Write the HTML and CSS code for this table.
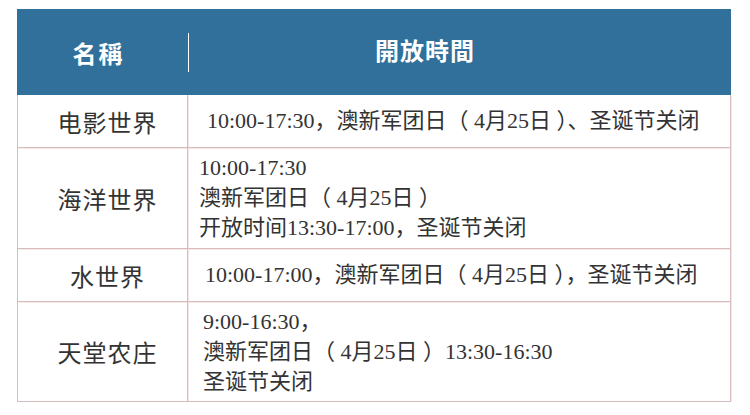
FILE: index.html
```html
<!DOCTYPE html>
<html lang="zh">
<head>
<meta charset="utf-8">
<title>开放时间</title>
<link rel="stylesheet" href="styles.css">
</head>
<body>
<div class="wrap">
  <div class="table">
    <div class="head name-h">名稱</div>
    <div class="head time-h"><span class="divider">開放時間</span></div>

    <div class="cell name r1">电影世界</div>
    <div class="cell time r1 p20">10:00-17:30，澳新军团日（ 4月25日 ）、圣诞节关闭</div>

    <div class="cell name r2">海洋世界</div>
    <div class="cell time r2 p12">10:00-17:30<br>澳新军团日（ 4月25日 ）<br>开放时间13:30-17:00，圣诞节关闭</div>

    <div class="cell name r3">水世界</div>
    <div class="cell time r3 p18">10:00-17:00，澳新军团日（ 4月25日 ），圣诞节关闭</div>

    <div class="cell name r4">天堂农庄</div>
    <div class="cell time r4 p16">9:00-16:30，<br>澳新军团日（ 4月25日 ）13:30-16:30<br>圣诞节关闭</div>
  </div>
</div>
</body>
</html>
```

FILE: styles.css
```css
html, body {
  margin: 0;
  padding: 0;
  background: #ffffff;
}

.wrap {
  padding: 9px 19px 0 17px;
}

.table {
  display: grid;
  grid-template-columns: 170px 1fr;
  grid-template-rows: 86px 53px 101px 53px 100px;
  border-left: 1px solid #d6bcbc;
  font-family: "Liberation Serif", "Noto Sans CJK SC", serif;
  color: #333333;
}

.head {
  background: #31709b;
  color: #ffffff;
  font-family: "Liberation Serif", "Noto Sans CJK TC", serif;
  font-weight: bold;
  font-size: 24px;
  display: flex;
  align-items: center;
}

.name-h {
  justify-content: center;
  padding-right: 8px;
  letter-spacing: 2px;
  margin-left: -1px;
}

.time-h {
  padding-top: 1px;
}

.divider {
  display: block;
  border-left: 1px solid #ffffff;
  height: 39px;
  line-height: 39px;
  padding-left: 186px;
  letter-spacing: 1px;
}

.cell {
  border-right: 1px solid #d6bcbc;
  border-bottom: 1px solid #d6bcbc;
  box-shadow: 1px 1px 0 #f6e8e8;
  display: flex;
  align-items: center;
}

.name {
  justify-content: center;
  padding-left: 10px;
  font-size: 24px;
  letter-spacing: 1px;
}

.time {
  font-size: 22px;
  line-height: 30px;
}

.p20 { padding-left: 19px; }
.p12 { padding-left: 11px; }
.p18 { padding-left: 17px; }
.p16 { padding-left: 15px; }
```
